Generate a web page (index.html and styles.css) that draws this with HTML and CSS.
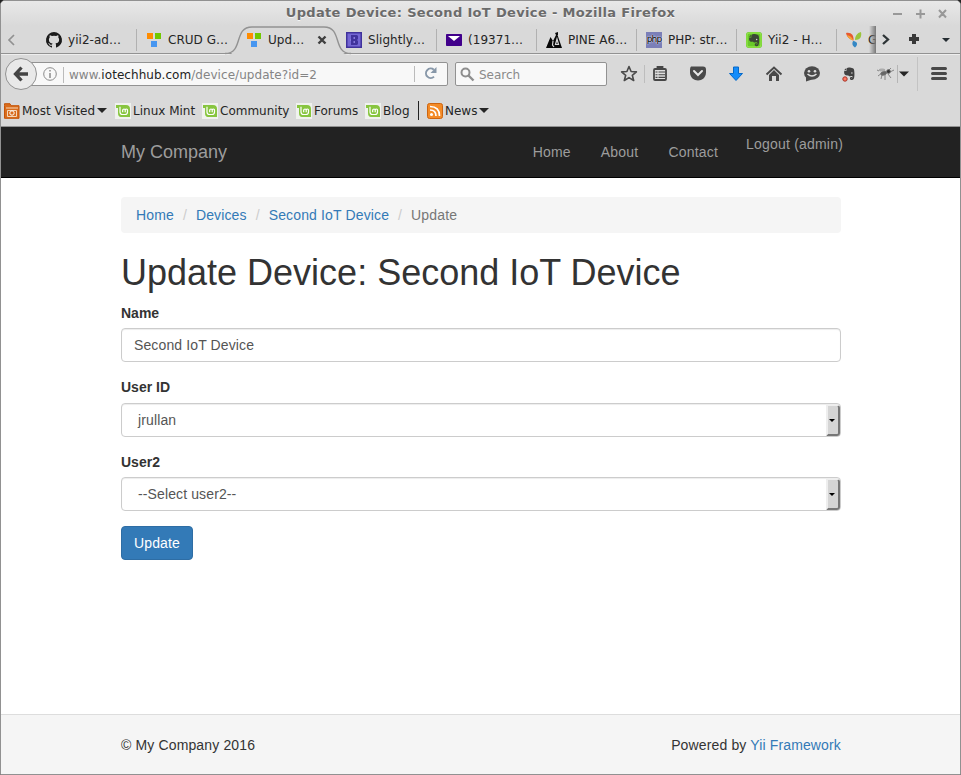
FILE: index.html
```html
<!DOCTYPE html>
<html lang="en">
<head>
<meta charset="utf-8">
<title>Update Device: Second IoT Device</title>
<link rel="stylesheet" href="styles.css">
</head>
<body>
<svg width="0" height="0" class="defs">
  <defs>
    <symbol id="mint" viewBox="0 0 16 16"><path fill="#f0f2ee" d="M0 0h16v16H0z"/><path fill="#87c53f" d="M1 2h10q4 0 4 4v8H6q-3 0-3-4V5H1z"/><path fill="none" stroke="#fff" stroke-width="1.200" d="M5 3.800V9q0 2.500 2.500 2.500h2.500q2.500 0 2.500-2.500V7q0-1-1-1T10.200 7v2.300M10.200 7q0-1-1.200-1T7.700 7v2.300"/></symbol>
    <symbol id="yiiapp" viewBox="0 0 16 16"><path fill="#ff8c00" d="M1 1h6v6H1z"/><path fill="#71c800" d="M9 1h6v6H9z"/><path fill="#4796f0" d="M5 9h6v6H5z"/></symbol>
    <symbol id="elephant" viewBox="0 0 16 16"><path d="M5 2.200C7 0 10 1.500 12 2c1.500.4 1.500 2 1.700 4 .3 3 .1 6-.7 8-1 1.600-4.200 1.200-4.200-.7 0-1.400 1.300-1.800 2.700-1.500v1.100h-1.200c0 .7 1.600.5 1.600-1.100 0-1-1-1.500-2-1.300-1 .8-2.900.3-3-.9-1.500.7-3.600.3-4.200-1.200C2.200 7 2.400 5.500 2.500 5h2.400z"/><path d="M2.300 4.300 4.500 2v2.300z"/><circle cx="11" cy="7.300" r=".8" fill="#ddd"/></symbol>
  </defs>
</svg>
<div class="window">
  <header class="titlebar">
    <span class="wtitle">Update Device: Second IoT Device - Mozilla Firefox</span>
    <svg class="wbuttons" width="58" height="12" viewBox="0 0 58 12"><path fill="none" stroke="#989898" stroke-width="2" d="M1 6h9M24 6h9M28.500 1.500v9M47 2l7 7.500M54 2l-7 7.500"/></svg>
  </header>

  <div class="tabs">
    <div class="scroll"><svg width="10" height="12" viewBox="0 0 10 12"><path fill="none" stroke="#919191" stroke-width="1.700" d="M7 1 2 6l5 5"/></svg></div>
    <div class="tab sep"><svg class="ic" viewBox="0 0 16 16"><path fill="#1b1b1b" d="M8 0a8 8 0 0 0-2.530 15.590c.4.070.55-.17.55-.38v-1.500c-2.230.490-2.700-.94-2.700-.94-.360-.93-.89-1.180-.89-1.180-.73-.5.060-.49.060-.49.8.060 1.230.83 1.230.83.71 1.220 1.870.87 2.330.66.070-.52.280-.87.500-1.070-1.770-.2-3.640-.89-3.640-3.950 0-.87.310-1.590.82-2.150-.08-.2-.36-1.020.08-2.120 0 0 .67-.21 2.200.82a7.600 7.600 0 0 1 4 0c1.530-1.040 2.200-.82 2.200-.82.44 1.100.16 1.920.08 2.120.51.56.82 1.280.82 2.150 0 3.070-1.870 3.750-3.650 3.950.29.25.54.73.54 1.480v2.200c0 .21.150.460.550.380A8 8 0 0 0 8 0z"/></svg><span>yii2-ad…</span></div>
    <div class="tab"><svg class="ic"><use href="#yiiapp"/></svg><span>CRUD G…</span></div>
    <div class="tab active">
      <svg class="curve" width="126" height="30" viewBox="0 0 126 30"><path fill="#d9d9d9" d="M2 29C18 28 7 1.500 25 1.500h74C117 1.500 108 28 124 29z"/><path fill="none" stroke="#929292" stroke-width="1.400" d="M0 27.500C19 27.500 8 1 27 1h72c19 0 8 26.500 27 26.500"/></svg>
      <svg class="ic"><use href="#yiiapp"/></svg><span>Upd…</span>
      <svg class="close" width="10" height="10" viewBox="0 0 10 10"><path stroke="#3f3f3f" stroke-width="2.400" d="m1.500 1.500 7 7m0-7-7 7"/></svg>
    </div>
    <div class="tab sep"><svg class="ic" viewBox="0 0 16 16"><path fill="#7466d4" stroke="#40329c" stroke-width="1.500" d="M.75.75h14.500v14.500H.75z"/><path fill="#40329c" d="M5 3h6l1 1v3l-1 1 1 1v3l-1 1H5z"/><path fill="#8779dc" d="M7.500 5H9v2H7.500zM7.500 9H9v2H7.500zM4 7h1v2H4z"/></svg><span>Slightly…</span></div>
    <div class="tab sep"><svg class="ic" viewBox="0 0 16 16"><rect y="2" width="16" height="12" rx=".8" fill="#41008b"/><path fill="#fff" d="M2 4h12L8 9z"/></svg><span>(19371…</span></div>
    <div class="tab sep"><svg class="ic" viewBox="0 0 16 16"><path fill="#080808" d="m0 16 4.500-11L7 9l3-6h1.500L16 16z"/><path fill="none" stroke="#d9d9d9" stroke-width="1.200" d="m7 9-.5 4L8 15M11 7l-1.500 5.500h3z"/><path fill="#080808" d="m9 1 3-1v3h-2z"/></svg><span>PINE A6…</span></div>
    <div class="tab sep"><span class="ic php">php</span><span>PHP: str…</span></div>
    <div class="tab sep"><svg class="ic" viewBox="0 0 16 16"><rect width="16" height="16" rx="3" fill="#68c92a"/><rect x="1" y="1" width="14" height="14" rx="2" fill="none" stroke="#a0ec53"/><g fill="#3c4637" transform="translate(1 1) scale(.88)"><use href="#elephant" width="16" height="16"/></g></svg><span>Yii2 - H…</span></div>
    <div class="tab clipped"><svg class="ic" viewBox="0 0 16 16"><path fill="#e8592e" d="M0 1c5-1 8 2 7.500 7.500C3 7 1 5 0 1z"/><path fill="#9bc43b" d="M15 0c1 5-1 8-6 8 0-4 2-7 6-8z"/><path fill="#f5a536" d="M1 3c3 .5 5 2.500 6.500 5.500C4 7.500 2 6 1 3z"/><path fill="#3588c5" d="M7 9c5 .5 5 4 2 6.500C6 13.500 6 11.500 7 9z"/></svg><span>G</span></div>
    <div class="tabtools">
      <svg width="86" height="28" viewBox="0 0 86 28"><path fill="none" stroke="#2d3436" stroke-width="2.300" d="m7 9 5 4.500L7 18"/><path stroke="#393939" stroke-width="4" d="M33 13h10M38 8v10"/><path fill="#252d32" d="M66 12h8l-4 4z"/></svg>
    </div>
  </div>

  <div class="navrow">
    <div class="back"><svg width="16" height="16" viewBox="0 0 16 16"><path fill="none" stroke="#444" stroke-width="3.300" d="M8.500 1.500 2.500 8l6 6.500M3 8h12"/></svg></div>
    <div class="url">
      <svg width="14" height="14" viewBox="0 0 14 14"><circle cx="7" cy="7" r="6.300" fill="none" stroke="#8b8b8b"/><path stroke="#8b8b8b" stroke-width="1.500" d="M7 3v1.500M7 6v5"/></svg>
      <span class="address">www.<b>iotechhub.com</b>/device/update?id=2</span>
      <span class="reload"><svg width="14" height="14" viewBox="0 0 14 14"><path fill="none" stroke="#8797a8" stroke-width="2" d="M10 10.600A4.700 4.700 0 1 1 9.800 3.700"/><path fill="#8797a8" d="M12.500 1v6h-6z"/></svg></span>
    </div>
    <div class="search"><svg width="15" height="15" viewBox="0 0 15 15"><circle cx="5.500" cy="5.500" r="4" fill="none" stroke="#8e8e8e" stroke-width="2"/><path stroke="#8e8e8e" stroke-width="2.400" d="m8.500 8.500 5 5"/></svg><span>Search</span></div>
    <svg class="tools" width="352" height="38" viewBox="0 0 352 38">
      <path fill="none" stroke="#4a4a4a" stroke-width="1.600" stroke-linejoin="round" d="m22 11.500 2.100 5 5.300.4-4.100 3.400 1.400 5.200-4.700-2.900-4.700 2.900 1.400-5.200-4.100-3.400 5.300-.4z"/>
      <path stroke="#bdbdbd" d="M37.500 10v18"/>
      <rect x="47" y="14" width="12" height="11" rx="1" fill="#dedede" stroke="#464646" stroke-width="1.800"/><path fill="none" stroke="#464646" stroke-width="1.800" d="M50.500 13.500V12h5v1.500"/><path stroke="#464646" stroke-width="1.100" d="M48.500 17h2m1 0h6.500m-9.500 2.700h2m1 0h6.500m-9.500 2.700h2m1 0h6.500"/>
      <path fill="#4a4a4a" d="M84 12h12q3 0 3 3v3c0 5-4 8-8 8s-8-3-8-8v-3q0-2 1-3z" transform="translate(0 -.5)"/><path fill="none" stroke="#e7e7e7" stroke-width="2" stroke-linecap="round" d="m87 16 4 4 4-4"/>
      <path fill="#148dfb" stroke="#0669c8" d="M126.500 12h5v6.500h4L129 25.500l-6.500-7h4z"/>
      <path fill="none" stroke="#4a4a4a" stroke-width="2" d="m159.500 19.500 7.500-7 7.500 7"/><path fill="#4a4a4a" d="m162 20 5-5 5 5v6h-3v-5h-4v5h-3z"/>
      <ellipse cx="205" cy="18" rx="8" ry="6.800" fill="#4a4a4a"/><path fill="#4a4a4a" d="M199 21v5.500l6-2z"/><circle cx="202" cy="16.200" r="1.300" fill="#ddd"/><circle cx="208" cy="16.200" r="1.300" fill="#ddd"/><path fill="none" stroke="#ddd" stroke-width="1.500" d="M200.500 19q4.500 4 9 0"/>
      <g fill="#424242" transform="translate(235 11.500) scale(.9)"><use href="#elephant" width="16" height="16"/></g><circle cx="238" cy="24" r="2.200" fill="#ff7864" stroke="#a53426"/>
      <g fill="none" stroke="#707070" stroke-width=".8"><path d="m271 21 4-3m0 2-1 4m4-4v5m3-6 3 4m-1-6 4-2m-6 1 3-3m-12 3-2-1"/><ellipse cx="276.500" cy="18.500" rx="3" ry="1.800" fill="#666" transform="rotate(-18 276 18)"/><circle cx="281.500" cy="16.500" r="1.900" fill="#333"/><ellipse cx="275" cy="15" rx="3" ry="1" fill="#bbb" stroke="#999"/></g>
      <path stroke="#b5b5b5" d="M290.500 10v18"/><path fill="#252525" d="M292 16.500h10l-5 5z"/><path stroke="#c3c3c3" d="M310.500 2v34"/>
      <path stroke="#484848" stroke-width="3" stroke-linecap="round" d="M325.500 13.500h13M325.500 18.500h13M325.500 23.500h13"/>
    </svg>
  </div>

  <div class="bookmarks">
    <span class="bm visited"><svg class="ic" viewBox="0 0 16 16"><path fill="#d96c1c" stroke="#c45409" d="M.5 2.500V.7h5.500l1 2h8v12.600H.5z"/><path fill="none" stroke="#f6d7b9" d="M2 5h12M3.500 7.500h9v6h-9z"/><circle cx="8" cy="10" r="2.200" fill="none" stroke="#fff"/></svg>Most Visited<i class="caret"></i></span>
    <span class="bm linux"><svg class="ic"><use href="#mint"/></svg>Linux Mint</span>
    <span class="bm community"><svg class="ic"><use href="#mint"/></svg>Community</span>
    <span class="bm forums"><svg class="ic"><use href="#mint"/></svg>Forums</span>
    <span class="bm blog"><svg class="ic"><use href="#mint"/></svg>Blog</span>
    <span class="bm news"><svg class="ic" viewBox="0 0 16 16"><rect x=".5" y=".5" width="15" height="15" rx="2" fill="#f48b27" stroke="#cd6510"/><circle cx="4.500" cy="11.500" r="1.500" fill="#fff"/><path fill="none" stroke="#fff" stroke-width="1.700" d="M3 7q6 0 6 6M3 3.500q9.500 0 9.500 9.500"/></svg>News<i class="caret"></i></span>
  </div>

  <nav class="navbar"><div class="container">
    <a class="brand">My Company</a>
    <div class="links"><a>Home</a><a>About</a><a>Contact</a><a class="logout">Logout (admin)</a></div>
  </div></nav>

  <main class="container">
    <div class="breadcrumb"><a>Home</a><i>/</i><a>Devices</a><i>/</i><a>Second IoT Device</a><i>/</i><span>Update</span></div>
    <h1>Update Device: Second IoT Device</h1>
    <div class="group"><label>Name</label><div class="control">Second IoT Device</div></div>
    <div class="group tall"><label>User ID</label><div class="control select">jrullan<span class="drop"></span></div></div>
    <div class="group"><label>User2</label><div class="control select">--Select user2--<span class="drop"></span></div></div>
    <button class="btn">Update</button>
  </main>

  <footer class="footer"><div class="container"><span>© My Company 2016</span><span>Powered by <a>Yii Framework</a></span></div></footer>
</div>
</body>
</html>
```
FILE: styles.css
```css
* { box-sizing: border-box; }
body { margin: 0; background: #222; font: 14px/20px "Liberation Sans", Arial, sans-serif; color: #333; }
.defs { position: absolute; }
.window { width: 961px; height: 775px; border: 1px solid #919191; border-radius: 5px 5px 0 0; background: #fff; display: flex; flex-direction: column; overflow: hidden; }
svg { display: block; flex: none; overflow: visible; }
.ic { width: 16px; height: 16px; flex: none; }

.titlebar, .tabs, .navrow, .bookmarks { font-family: "DejaVu Sans", sans-serif; font-size: 12px; color: #252525; flex: none; }
.titlebar { height: 25px; display: flex; justify-content: center; position: relative; background: linear-gradient(#e8e8e8, #d9d9d9); }
.wtitle { font-size: 13px; font-weight: bold; letter-spacing: .34px; line-height: 24px; color: #6b6b6b; text-shadow: 0 1px #f5f5f5; white-space: nowrap; }
.wbuttons { position: absolute; right: 10px; top: 7px; }

.tabs { height: 28px; display: flex; background: #d9d9d9; border-bottom: 1px solid #929292; }
.scroll { width: 35px; flex: none; padding: 8px 0 0 6px; }
.tab { width: 100px; height: 27px; flex: none; padding: 1px 0 0 10px; display: flex; align-items: center; gap: 6px; position: relative; white-space: nowrap; }
.tab.sep::after { content: ""; position: absolute; right: -1px; top: 3px; height: 22px; width: 1px; background: #b1b1b1; }
.tab span, .tab .ic { position: relative; z-index: 2; letter-spacing: .04px; }
.curve { position: absolute; left: -11px; top: 0; z-index: 1; }
.close { position: absolute; left: 81px; top: 9px; z-index: 2; }
.tab .php { background: #7b7fb8; color: #000; font: 9px/15px "DejaVu Sans", sans-serif; letter-spacing: -.8px; text-align: center; text-shadow: 0 0 1px #fff, 0 0 2px #fff; }
.tab.clipped { width: 40px; overflow: hidden; }
.clipped::before { content: ""; position: absolute; z-index: 3; right: 0; top: 0; width: 7px; height: 27px; background: linear-gradient(90deg, #8880, #777); }
.tabtools { flex: 1; height: 27px; }

.navrow { height: 39px; display: flex; align-items: center; background: #d9d9d9; border-top: 1px solid #eee; padding-left: 4px; }
.back { width: 32px; height: 32px; border: 1px solid #929292; border-radius: 50%; background: #e9e9e9; display: flex; align-items: center; justify-content: center; z-index: 1; flex: none; }
.url { width: 421px; height: 24px; margin-left: -10px; padding-left: 15px; display: flex; align-items: center; background: #f8f8f8; border: 1px solid #929292; border-radius: 2px; }
.address { margin-left: 6px; padding-left: 5px; border-left: 1px solid #bbb; line-height: 16px; letter-spacing: .05px; color: #858585; position: relative; top: 1px; }
.address b { font-weight: normal; color: #222; }
.reload { margin-left: auto; width: 33px; padding-left: 9px; border-left: 1px solid #bbb; height: 16px; }
.search { width: 152px; height: 24px; margin-left: 7px; padding-left: 4px; display: flex; align-items: center; gap: 4px; color: #8a8a8a; background: #f8f8f8; border: 1px solid #929292; border-radius: 2px; }
.search span { padding-top: 1px; }

.bookmarks { height: 34px; padding: 2px 0 0 3px; display: flex; align-items: center; background: #d9d9d9; border-bottom: 1px solid #919191; }
.bm { display: flex; align-items: center; gap: 2px; white-space: nowrap; flex: none; }
.visited { width: 111px; }
.linux { width: 87px; }
.community { width: 94px; }
.forums { width: 69px; }
.blog { width: 53px; }
.news { border-left: 1px solid #222; height: 19px; padding-left: 8px; }
.caret { border: 5px solid transparent; border-top-color: #252525; border-bottom: 0; }

.navbar { height: 51px; flex: none; background: #222; border-bottom: 1px solid #000; }
.container { width: 720px; margin: 0 auto; }
main.container, .navbar .container, .footer .container { margin-left: 120px; }
.navbar .container { display: flex; justify-content: space-between; color: #9d9d9d; }
.brand { font-size: 18px; line-height: 50px; }
.links { display: flex; gap: 30px; line-height: 50px; margin-right: -2px; letter-spacing: .2px; }
.links .logout { line-height: 34px; margin-left: -2px; }

main { flex: 1; padding-top: 19px; }
.breadcrumb { height: 36px; padding: 8px 15px; background: #f5f5f5; border-radius: 4px; display: flex; color: #777; letter-spacing: .14px; }
.breadcrumb i { font-style: normal; color: #ccc; width: 22px; text-align: center; }
a { color: inherit; }
.breadcrumb a, .footer a { color: #337ab7; }
h1 { font-size: 36px; line-height: 40px; font-weight: 500; margin: 20px 0 10px; white-space: nowrap; }
.group { margin-bottom: 15px; }
.tall label { margin-bottom: 6px; }
label { display: block; font-weight: bold; margin-bottom: 5px; }
.control { height: 34px; padding: 6px 12px; border: 1px solid #ccc; border-radius: 4px; color: #555; letter-spacing: .12px; box-shadow: inset 0 1px 1px rgba(0,0,0,.075); position: relative; }
.select { padding-left: 16px; }
.drop { position: absolute; right: 0; top: 1px; width: 14px; height: 31px; background: #d5d5d5; border: 2px solid #eee; border-right-color: #777; border-bottom-color: #777; border-top-width: 1px; border-radius: 0 3px 3px 0; }
.drop::after { content: ""; position: absolute; left: 1px; top: 13px; border: 3px solid transparent; border-top-color: #000; border-bottom: 0; }
.btn { display: block; height: 34px; width: 72px; padding: 0; border: 1px solid #2e6da4; border-radius: 4px; background: #337ab7; color: #fff; font: inherit; letter-spacing: .12px; }

.footer { height: 60px; flex: none; background: #f5f5f5; border-top: 1px solid #ddd; padding-top: 20px; letter-spacing: .14px; }
.footer .container { display: flex; justify-content: space-between; }
.tall + .group { margin-top: 0; }
```
